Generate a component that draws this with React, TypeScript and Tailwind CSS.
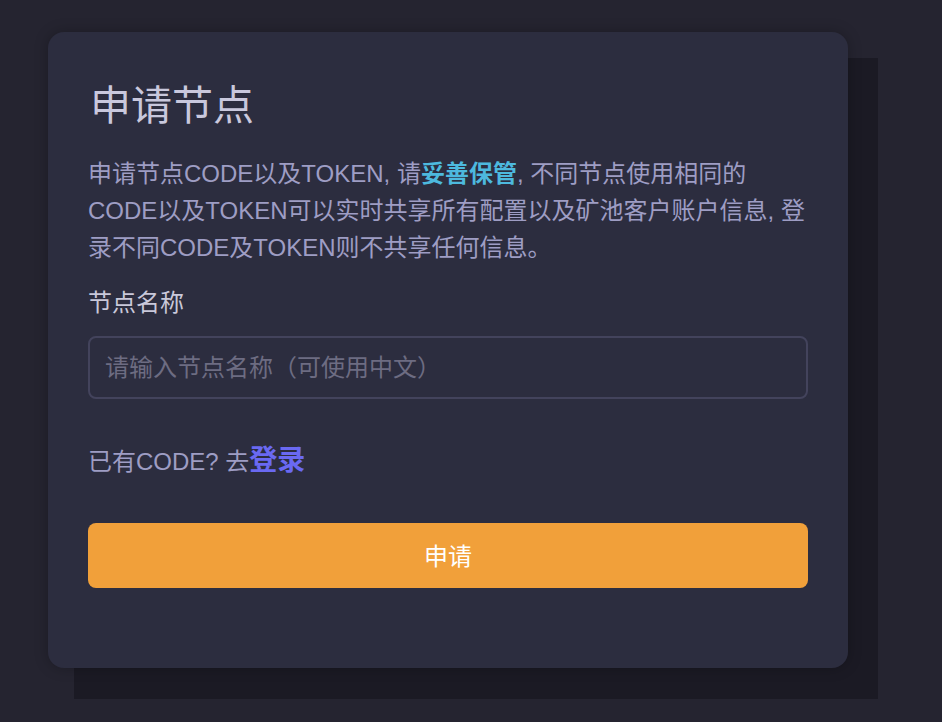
export default function App() {
  return (
    <div
      className="min-h-[722px] bg-[#252430] pl-12 pt-8"
      style={{ fontFamily: '"Liberation Sans", "Noto Sans CJK SC", sans-serif' }}
    >
      <div className="relative w-[800px]">
        {/* dark block behind the card */}
        <div className="absolute left-[26px] top-[26px] -right-[30px] -bottom-[31px] bg-[#1b1a24]" />

        <div className="relative flex h-[636px] flex-col rounded-2xl bg-[#2c2d3f] px-10 pt-[46px] shadow-[0_0_14px_rgba(0,0,0,0.25)]">
          <h1 className="pl-[2px] text-[41px] font-normal leading-[56px] text-[#c9c8dd]">申请节点</h1>

          <p className="mt-[21px] text-[24px] leading-[37px] text-[#9e9dc4]">
            申请节点CODE以及TOKEN, 请<span className="font-bold text-[#4db9de]">妥善保管</span>, 不同节点使用相同的CODE以及TOKEN可以实时共享所有配置以及矿池客户账户信息, 登录不同CODE及TOKEN则不共享任何信息。
          </p>

          <label className="mt-[18px] text-[24px] leading-[37px] text-[#c9c8da]">节点名称</label>

          <input
            type="text"
            placeholder="请输入节点名称（可使用中文）"
            className="mt-[15px] h-[63px] w-full rounded-lg border-2 border-[#43435c] bg-transparent px-[15px] text-[24px] text-[#c9c8da] outline-none placeholder:text-[#6d6c82]"
          />

          <div className="mt-[43px] text-[24px] leading-[37px] text-[#9e9dc4]">
            已有CODE? 去<span className="text-[28px] font-bold text-[#6a69f2]">登录</span>
          </div>

          <button className="mt-[43px] h-[65px] w-full rounded-lg bg-[#f1a03a] pt-[2px] text-[24px] text-white">
            申请
          </button>
        </div>
      </div>
    </div>
  )
}
